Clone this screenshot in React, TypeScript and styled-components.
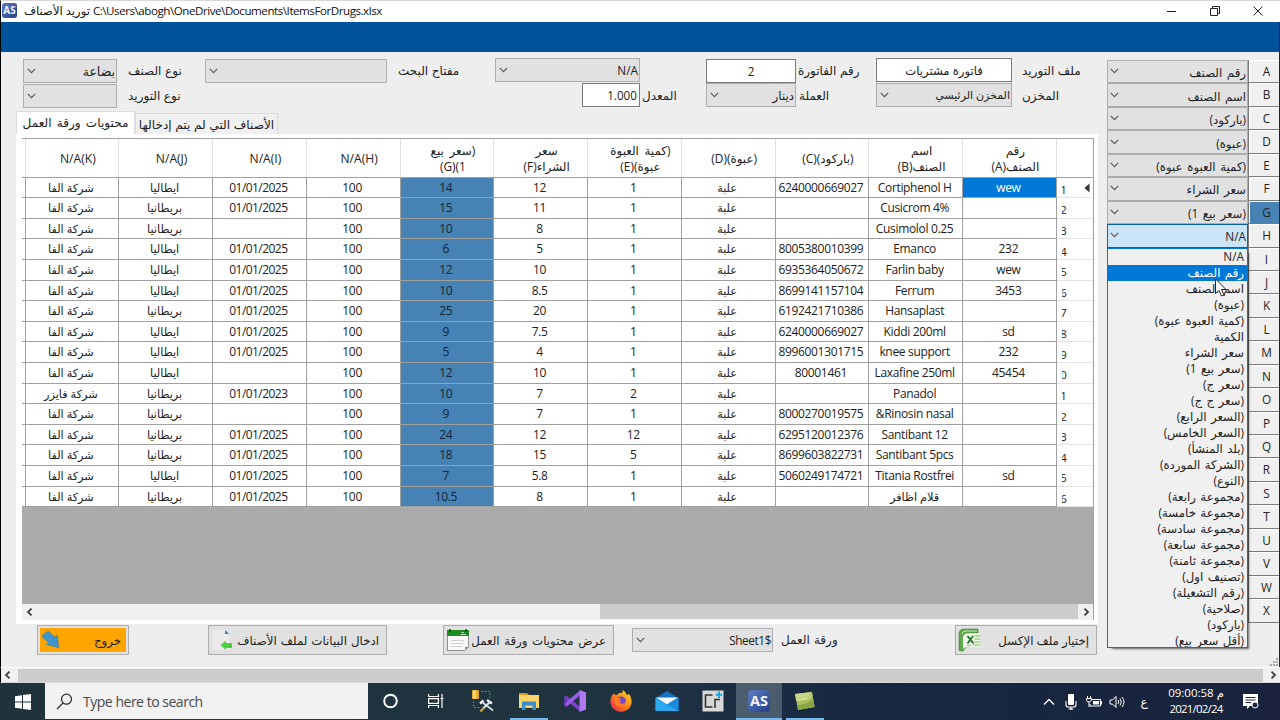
import type { ReactNode } from "react";
import styled, { createGlobalStyle, css } from "styled-components";

const GlobalStyle = createGlobalStyle`
    * {
        box-sizing: border-box;
    }

    body {
        margin: 0;
        overflow: hidden;
        font-family: "Open Sans", "DejaVu Sans", sans-serif;
        font-size: 11.8px;
        color: #222;
    }
`;

const Window = styled.div`
    width: 1280px;
    height: 720px;
    display: flex;
    flex-direction: column;
    background: #eeeeee;
`;

const TitleBar = styled.header`
    height: 22px;
    display: flex;
    align-items: center;
    padding: 0 0 2px 1px;
    background: #fff;
    border-top: 1px solid #d8d8d8;
    border-left: 1px solid #000;
`;

const TitleText = styled.span`
    margin-left: 7px;
    flex: 1;
    font-size: 11.6px;
    white-space: pre;
    color: #111;
`;

const TitlePath = styled.span`
    letter-spacing: -0.46px;
`;

const WindowButtons = styled.div`
    display: flex;
    gap: 31px;
    padding-right: 16px;
`;

const BlueBand = styled.div`
    height: 30px;
    background: #00539b;
    border-left: 1px solid #000;
    border-right: 1px solid #222;
`;

const Body = styled.main`
    height: 615px;
    display: flex;
    border-left: 1px solid #000;
    border-right: 1px solid #222;
    position: relative;
`;

const LeftPane = styled.div`
    width: 1106px;
    display: flex;
    flex-direction: column;
    padding-top: 6px;
`;

const FormGrid = styled.div`
    height: 53px;
    display: grid;
    grid-template-columns: 94px 88px 182px 108px 145px 66px 90px 80px 136px 84px;
    grid-template-rows: 24.5px 24.5px;
    padding-left: 22px;
`;

const Label = styled.label<{ $pad: number }>`
    padding: 5.4px 0 0 ${(p) => p.$pad}px;
    font-size: 12px;
    line-height: 16px;
    word-spacing: 0.5px;
    white-space: nowrap;
`;

const Input = styled.div<{ $center?: boolean; $top?: number }>`
    height: 24px;
    margin-top: ${(p) => p.$top ?? 0}px;
    border: 1px solid #7a7a7a;
    background: #fff;
    line-height: 22px;
    padding: 0 2px;
    text-align: ${(p) => (p.$center ? "center" : "right")};
    font-size: 11.7px;
`;

const RateInput = styled(Input)`
    width: 58px;
    justify-self: end;
`;

const Select = styled.div<{ $top?: number; $open?: boolean; $height?: number; $size?: number }>`
    height: ${(p) => p.$height ?? 24}px;
    margin-top: ${(p) => p.$top ?? 0}px;
    display: flex;
    justify-content: space-between;
    align-items: center;
    padding: 0 1px 0 3px;
    border: 1px solid ${(p) => (p.$open ? "#0a64ad" : "#adadad")};
    background: ${(p) => (p.$open ? "#cce4f7" : "#e1e1e1")};
    font-size: ${(p) => p.$size ?? 11.8}px;
    unicode-bidi: plaintext;
    white-space: nowrap;
`;

const MapSelect = styled(Select)`
    padding: 1px 1px 0 2px;
    word-spacing: 1.5px;

    svg {
        margin-top: -2px;
    }
`;

const Tabs = styled.div`
    height: 23px;
    display: flex;
    align-items: flex-end;
    padding-left: 15px;
`;

const Tab = styled.div<{ $active?: boolean }>`
    height: ${(p) => (p.$active ? 23 : 21)}px;
    width: ${(p) => (p.$active ? 119 : 143)}px;
    border: 1px solid #dcdcdc;
    border-bottom: none;
    background: ${(p) => (p.$active ? "#fff" : "#f0f0f0")};
    text-align: center;
    font-size: 12.1px;
    word-spacing: ${(p) => (p.$active ? 2 : 0.5)}px;
    line-height: ${(p) => (p.$active ? 22 : 21)}px;
    white-space: nowrap;
`;

const Panel = styled.section`
    width: 1082px;
    height: 490px;
    margin-left: 15px;
    padding: 4px 4px 4px 6px;
    background: #fff;
`;

const GridBox = styled.div`
    width: 1072px;
    height: 482px;
    display: flex;
    flex-direction: column;
    background: #ababab;
    border-top: 1px solid #a0a0a0;
    border-right: 1px solid #a0a0a0;
`;

const rowGrid = css`
    display: grid;
    grid-template-columns: 3.5px repeat(11, 93.75px) 1fr;
    background: #fff;
`;

const HeadRow = styled.div`
    ${rowGrid}
    height: 38.5px;
    border-bottom: 1px solid #a0a0a0;
`;

const HeadCell = styled.div<{ $latin?: boolean }>`
    direction: rtl;
    display: flex;
    flex-direction: column;
    justify-content: center;
    align-items: center;
    font-size: ${(p) => (p.$latin ? 12.1 : 11.9)}px;
    line-height: 15.5px;
    word-spacing: 2.5px;
    border-right: 1px solid #e0e0e0;
    padding-left: 12px;
    padding-top: 2px;
    white-space: nowrap;
`;

const HeadEdge = styled.div`
    border-right: 1px solid #e0e0e0;
`;

const DataRow = styled.div`
    ${rowGrid}
    height: 20.62px;
`;

const Cell = styled.div<{ $tone?: "blue" | "selected"; $kind?: "arabic" | "date" }>`
    overflow: hidden;
    padding-right: 2px;
    text-align: center;
    font-size: ${(p) => (p.$kind === "arabic" ? 11.3 : 12)}px;
    letter-spacing: ${(p) => (p.$kind === "arabic" ? "normal" : p.$kind === "date" ? "-0.55px" : "-0.33px")};
    line-height: 20px;
    white-space: nowrap;
    unicode-bidi: plaintext;
    border-right: 1px solid #a0a0a0;
    border-bottom: 1px solid #a0a0a0;
    ${(p) => p.$tone === "blue" && css`
        background: #4682b4;
        color: #12263a;
    `}
    ${(p) => p.$tone === "selected" && css`
        background: #0078d7;
        color: #fff;
    `}
`;

const EdgeCell = styled.div`
    border-right: 1px solid #a0a0a0;
    border-bottom: 1px solid #a0a0a0;
`;

const RowHead = styled.div`
    display: flex;
    align-items: center;
    justify-content: space-between;
    padding: 0 3px 0 5px;
    border-bottom: 1px solid #e4e4e4;

    svg {
        margin-top: 1px;
    }
`;

const RowNumber = styled.span`
    width: 5px;
    height: 15px;
    margin-top: 4px;
    overflow: hidden;
    display: flex;
    justify-content: flex-end;
    font-size: 11.5px;
    line-height: 15px;
`;

const GridFiller = styled.div`
    flex: 1;
`;

const GridScroll = styled.div`
    height: 16px;
    display: flex;
    justify-content: space-between;
    align-items: center;
    background: #f0f0f0;
    padding: 0 3px 1px 4px;
`;

const ScrollThumb = styled.div`
    width: 478px;
    height: 15px;
    margin-left: auto;
    margin-right: 5px;
    background: #cdcdcd;
`;

const Actions = styled.footer`
    display: flex;
    align-items: flex-start;
    padding: 1px 0 0 36px;
`;

const Button = styled.button<{ $width: number; $gap: number; $exit?: boolean; $space?: number }>`
    width: ${(p) => p.$width}px;
    height: 30px;
    margin-right: ${(p) => p.$gap}px;
    display: flex;
    align-items: center;
    justify-content: space-between;
    padding: ${(p) => (p.$exit ? "0 7px 0 3px" : "0 7px 0 2px")};
    border: 1px solid #adadad;
    background: ${(p) => (p.$exit ? "#ffa500" : "#e1e1e1")};
    box-shadow: ${(p) => (p.$exit ? "inset 0 0 0 2px #e1e1e1" : "none")};
    font: inherit;
    word-spacing: ${(p) => p.$space ?? 0}px;
    color: #222;
    white-space: nowrap;
`;

const SheetLabel = styled.span`
    width: 182px;
    padding: 7px 0 0 8px;
    font-size: 12px;
    word-spacing: 1px;
    line-height: 16px;
`;

const SheetSelect = styled(Select)`
    width: 141px;
    letter-spacing: -0.4px;
`;

const MapPane = styled.aside`
    width: 172px;
    padding-top: 8px;
    display: flex;
`;

const MapSelects = styled.div`
    width: 141px;
`;

const MapSlot = styled.div`
    height: 23.45px;
    position: relative;
`;

const Letters = styled.div`
    flex: 1;
`;

const Letter = styled.div<{ $on?: boolean }>`
    height: 23.45px;
    padding-left: 5px;
    border-left: 1px solid #7a7a7a;
    border-bottom: 1.5px solid #7a7a7a;
    text-align: center;
    line-height: 23px;
    background: ${(p) => (p.$on ? "#4682b4" : "#f0f0f0")};
    box-shadow: inset 1px 1px 0 #fff;
`;

const DropList = styled.div`
    position: absolute;
    top: 23.5px;
    left: 0;
    width: 141px;
    height: 400px;
    z-index: 2;
    overflow: hidden;
    direction: rtl;
    background: #f0f0f0;
    border: 1px solid #0078d7;
    box-shadow: 3px 3px 2px -2px rgba(0, 0, 0, 0.6);
`;

const Option = styled.div<{ $on?: boolean }>`
    height: 16px;
    line-height: 15px;
    padding: 0 3px;
    word-spacing: 1.3px;
    white-space: nowrap;
    color: ${(p) => (p.$on ? "#fff" : "#222")};
    background: ${(p) => (p.$on ? "#0078d7" : "transparent")};
`;

const Pointer = styled.svg`
    position: absolute;
    left: 1213px;
    top: 226px;
    z-index: 3;
`;

const Grip = styled.svg`
    position: absolute;
    right: 1px;
    bottom: 1px;
`;

const PageScroll = styled.div`
    height: 16px;
    display: flex;
    align-items: center;
    justify-content: space-between;
    padding: 0 3px 0 3px;
    background: #f0f0f0;
    border-top: 1px solid #fff;
    border-bottom: 1px solid #d8d8d8;
    border-left: 1px solid #000;
`;

const PageThumb = styled.div`
    width: 1245px;
    height: 13px;
    margin-right: 1px;
    background: #cdcdcd;
`;

const Taskbar = styled.nav`
    height: 37px;
    display: flex;
    color: #fff;
    background: linear-gradient(90deg, #20333b 0%, #1f3440 45%, #1a2942 65%, #17263f 80%, #1a223c 100%);
`;

const StartButton = styled.div`
    width: 45px;
    display: flex;
    align-items: center;
    justify-content: center;
`;

const SearchBox = styled.div`
    width: 323px;
    height: 36px;
    display: flex;
    align-items: center;
    padding-left: 11px;
    gap: 10px;
    background: #f2f2f2;
    color: #4a4a4a;
    font-size: 14px;
    letter-spacing: -0.48px;
`;

const TaskItem = styled.div<{ $open?: boolean; $active?: boolean }>`
    width: 38px;
    margin: 0 4px;
    display: flex;
    align-items: center;
    justify-content: center;
    border-bottom: 2px solid ${(p) => (p.$open ? "#76b9ed" : "transparent")};
    background: ${(p) => (p.$active ? "#4b5c6d" : "transparent")};
    background-clip: padding-box;
    ${(p) => p.$active && css`
        width: 46px;
        margin: 0 0;
    `}
`;

const TaskItems = styled.div`
    display: flex;
    flex: 1;
`;

const Tray = styled.div`
    display: flex;
    align-items: center;
    padding-right: 12px;
`;

const TrayIcon = styled.div<{ $width: number }>`
    width: ${(p) => p.$width}px;
    display: flex;
    justify-content: center;
    font-size: 12px;
`;

const Clock = styled.div`
    width: 72px;
    padding-bottom: 2px;
    text-align: center;
    font-size: 11.5px;
    line-height: 16px;
    white-space: pre;
    letter-spacing: -0.95px;
`;

const ClockDate = styled.div`
    letter-spacing: -0.8px;
`;

const Chevron = () => (
    <svg width="9" height="6" viewBox="0 0 9 6" fill="none" stroke="#555" strokeWidth="1.1">
        <path d="M0.8 0.8 4.5 4.6 8.2 0.8" />
    </svg>
);

const Arrow = ({ right }: { right?: boolean }) => (
    <svg width="7" height="8" viewBox="0 0 7 8" fill="none" stroke="#404040" strokeWidth="1.8">
        <path d={right ? "M1.5 0.6 5 4 1.5 7.4" : "M5.5 0.6 2 4 5.5 7.4"} />
    </svg>
);

const AppLogo = ({ size }: { size: number }) => (
    <svg width={size} height={size} viewBox="0 0 22 22">
        <defs>
            <linearGradient id="logo" x1="0" y1="0" x2="1" y2="1">
                <stop offset="0" stopColor="#5d7dc4" />
                <stop offset="1" stopColor="#253f85" />
            </linearGradient>
        </defs>
        <rect width="22" height="22" rx="4" fill="url(#logo)" />
        <text x="11" y="16" fontFamily="Open Sans" fontWeight="700" fontSize="14.5" textAnchor="middle" fill="#f2f4fa">AS</text>
    </svg>
);

const ExitIcon = () => (
    <svg width="20" height="20" viewBox="0 0 20 20">
        <path d="M1.500 5 7.500 1 13.500 7 16.500 5.500 17.500 17.500 5.500 14.500 7.500 12.500 1.500 7Z" fill="#3f95cc" stroke="#2b74a8" strokeWidth=".6" />
    </svg>
);

const ImportIcon = () => (
    <svg width="22" height="24" viewBox="0 0 22 24">
        <path d="M2 2H14L18 6V22H1Z" fill="#ebebeb" />
        <path d="M14 2 18 6H14Z" fill="#2c83b8" />
        <path d="M9.500 17 15 12.500V15H21V20H15V22Z" fill="#4bd13b" />
    </svg>
);

const SheetIcon = () => (
    <svg width="24" height="24" viewBox="0 0 24 24">
        <path d="M1.500 3H22.500V19L19 22.500H1.500Z" fill="#fafafa" stroke="#777" strokeWidth=".8" />
        <rect x="1" y="2" width="22" height="6" fill="#1e8b22" />
        <path d="M4 1V4M20 1V4" stroke="#163f16" strokeWidth="1.500" />
        <path d="M15.500 4.500H18M14.500 6.500H20" stroke="#b9e3b4" />
        <path d="M5 12.500H18M5 15.500H18M5 18.500H16" stroke="#d0d0d0" />
        <path d="M19 22V19H22.500Z" fill="#888" />
    </svg>
);

const ExcelIcon = () => (
    <svg width="23" height="24" viewBox="0 0 23 24">
        <path d="M1 6Q1 1 6 1H20V5H9V18L5 23Q1 23 1 22Z" fill="#5fa84c" stroke="#3c7d2e" strokeWidth=".6" />
        <path d="M4 6Q4 3 8 3H19" fill="none" stroke="#c5e5b5" />
        <path d="M8 5.500H22V19H8L5 21V8Z" fill="#f2f8ee" />
        <path d="M16.500 8H22M16.500 11H22M16.500 14H22M15 17H22M9 17.500H13" stroke="#9ccd84" strokeWidth="1.600" />
        <path d="M9.500 8 15.500 15.500M15 8 9.500 15.500" stroke="#257a2c" strokeWidth="2" />
    </svg>
);

const ToolsIcon = () => (
    <svg width="24" height="24" viewBox="0 0 24 24">
        <rect x="1" y="1" width="7" height="9" rx="1" fill="#e9ab2b" />
        <rect x="2" y="1.500" width="3" height="8" fill="#ffdc7a" />
        <path d="M10 2.500H19V9M2.500 12V18.500H9" fill="none" stroke="#5c8a5e" strokeDasharray="2 1.500" />
        <path d="M11 13 22 21.500" stroke="#c9d6e0" strokeWidth="2" />
        <path d="M19 13 12.500 19" stroke="#dfe5ea" strokeWidth="2.200" />
        <path d="M13 18.500 9.500 22.500" stroke="#c7a550" strokeWidth="2.200" />
        <path d="M9 14.500 12.500 11.500M16 11 21 14.500" stroke="#eceff1" strokeWidth="2.400" />
    </svg>
);

const FolderIcon = () => (
    <svg width="22" height="20" viewBox="0 0 22 20">
        <path d="M1 2H9L11 4H1Z" fill="#e0981f" />
        <path d="M1 4H21V17H1Z" fill="#fbd567" />
        <path d="M4 19V10.500H18V19H14.500V14.500H7.500V19Z" fill="#3a8bcb" />
    </svg>
);

const StudioIcon = () => (
    <svg width="24" height="24" viewBox="0 0 24 24" fill="none">
        <path d="M2 8 17.500 20.500" stroke="#7b42c9" strokeWidth="3.600" />
        <path d="M2 16.500 17.500 3.500" stroke="#9a5be6" strokeWidth="3.600" />
        <path d="M2 7.500V17" stroke="#7039b8" strokeWidth="1.800" />
        <path d="M16.500 1 23 3.500V20.500L16.500 23Z" fill="#b179f1" />
    </svg>
);

const FirefoxIcon = () => (
    <svg width="24" height="24" viewBox="0 0 24 24">
        <defs>
            <linearGradient id="fox" x1="1" y1="0" x2="0" y2="1">
                <stop offset="0" stopColor="#ffe226" />
                <stop offset=".45" stopColor="#ff8a16" />
                <stop offset="1" stopColor="#e81c55" />
            </linearGradient>
        </defs>
        <path d="M4.500 4.500Q6 6 8 6 10 3 13 4L14 1Q17 3 18 6L20 5Q23 9 22.500 14 21 22 12 23 3 22 1.500 14 1 8 4.500 4.500Z" fill="url(#fox)" />
        <circle cx="12" cy="12.500" r="5" fill="#7348c8" />
        <path d="M5 10Q8 7.500 12 10 10 12 12 14.500 15 16 17 12 17 18 11 18 6 17 5 10Z" fill="#ff7b20" />
    </svg>
);

const MailIcon = () => (
    <svg width="24" height="22" viewBox="0 0 24 22">
        <path d="M0.500 8 12 1 23.500 8V21H0.500Z" fill="#1672bd" />
        <path d="M1 7.500H23L12 14.500Z" fill="#f4f8fb" />
        <path d="M0.500 7.500 12 14.500 23.500 21H0.500Z" fill="#2ba9ee" />
        <path d="M23.500 7.500 12 14.500 23.500 21Z" fill="#198ddc" />
    </svg>
);

const CrystalIcon = () => (
    <svg width="22" height="22" viewBox="0 0 22 22">
        <rect x=".5" y=".5" width="21" height="21" fill="#d9d9d9" />
        <path d="M10.500 5H3.500V17H10.500M13 18V9.500H18" fill="none" stroke="#333" strokeWidth="1.600" />
        <path d="M17 1.500V8M13.800 4.800H20.200" stroke="#21a3dc" strokeWidth="2" />
    </svg>
);

const StickyIcon = () => (
    <svg width="22" height="20" viewBox="0 0 22 20">
        <path d="M1 3 18 1 20.500 16 4 19Z" fill="#a9bf60" />
        <path d="M1 3 18 1 12 8 2 9Z" fill="#c9d886" />
        <path d="M3 14Q12 14 19.500 8L20.500 16 4 19Z" fill="#8aa543" />
        <path d="M2 9Q12 10 18.500 4" stroke="#e2ebb4" fill="none" />
    </svg>
);

const taskItems: { icon: ReactNode; open?: boolean; active?: boolean }[] = [
    { icon: <svg width="16" height="16"><circle cx="7.500" cy="8" r="6.300" fill="none" stroke="#fff" strokeWidth="1.900" /></svg> },
    {
        icon: (
            <svg width="18" height="16" fill="none" stroke="#fff" strokeWidth="1.200">
                <path d="M.6 1V3.500H10.400V1M.6 15V12.500H10.400V15M.6 5.600H10.400V10.400H.6ZM14 1V15M12.500 5.500H15.500" />
            </svg>
        ),
    },
    { icon: <ToolsIcon /> },
    { icon: <FolderIcon />, open: true },
    { icon: <StudioIcon /> },
    { icon: <FirefoxIcon /> },
    { icon: <MailIcon /> },
    { icon: <CrystalIcon /> },
    { icon: <AppLogo size={22} />, open: true, active: true },
    { icon: <StickyIcon />, open: true },
];

const headers = [
    ["N/A(K)"],
    ["N/A(J)"],
    ["N/A(I)"],
    ["N/A(H)"],
    ["(سعر بيع", "1)(G)"],
    ["سعر", "الشراء(F)"],
    ["(كمية العبوة", "عبوة)(E)"],
    ["(عبوة)(D)"],
    ["(باركود)(C)"],
    ["اسم", "الصنف(B)"],
    ["رقم", "الصنف(A)"],
];

const alpha = "شركة الفا";
const pfizer = "شركة فايزر";
const italy = "ايطاليا";
const britain = "بريطانيا";
const box = "علبة";

const rows = [
    [alpha, italy, "01/01/2025", "100", "14", "12", "1", box, "6240000669027", "Cortiphenol H", "wew"],
    [alpha, britain, "01/01/2025", "100", "15", "11", "1", box, "", "Cusicrom 4%", ""],
    [alpha, britain, "", "100", "10", "8", "1", box, "", "Cusimolol 0.25", ""],
    [alpha, italy, "01/01/2025", "100", "6", "5", "1", box, "8005380010399", "Emanco", "232"],
    [alpha, italy, "01/01/2025", "100", "12", "10", "1", box, "6935364050672", "Farlin baby", "wew"],
    [alpha, italy, "01/01/2025", "100", "10", "8.5", "1", box, "8699141157104", "Ferrum", "3453"],
    [alpha, britain, "01/01/2025", "100", "25", "20", "1", box, "6192421710386", "Hansaplast", ""],
    [alpha, italy, "01/01/2025", "100", "9", "7.5", "1", box, "6240000669027", "Kiddi 200ml", "sd"],
    [alpha, italy, "01/01/2025", "100", "5", "4", "1", box, "8996001301715", "knee support", "232"],
    [alpha, italy, "", "100", "12", "10", "1", box, "80001461", "Laxafine 250ml", "45454"],
    [pfizer, britain, "01/01/2023", "100", "10", "7", "2", box, "", "Panadol", ""],
    [alpha, britain, "", "100", "9", "7", "1", box, "8000270019575", "&Rinosin nasal", ""],
    [alpha, britain, "01/01/2025", "100", "24", "12", "12", box, "6295120012376", "Santibant 12", ""],
    [alpha, britain, "01/01/2025", "100", "18", "15", "5", box, "8699603822731", "Santibant 5pcs", ""],
    [alpha, italy, "01/01/2025", "100", "7", "5.8", "1", box, "5060249174721", "Titania Rostfrei", "sd"],
    [alpha, britain, "01/01/2025", "100", "10.5", "8", "1", box, "", "قلام اظافر", ""],
];

// letter-spacing would break the joined Arabic script, so cells are told apart
const kindOf = (value: string) => {
    if (/[\u0600-\u06ff]/.test(value)) return "arabic";
    return value.includes("/") ? "date" : undefined;
};

const mapped = ["رقم الصنف", "اسم الصنف", "(باركود)", "(عبوة)", "(كمية العبوة عبوة)", "سعر الشراء", "(سعر بيع 1)", "N/A"];

const options = [
    "N/A",
    "رقم الصنف",
    "اسم الصنف",
    "(عبوة)",
    "(كمية العبوة عبوة)",
    "الكمية",
    "سعر الشراء",
    "(سعر بيع 1)",
    "(سعر ج)",
    "(سعر ج ج)",
    "(السعر الرابع)",
    "(السعر الخامس)",
    "(بلد المنشأ)",
    "(الشركة الموردة)",
    "(النوع)",
    "(مجموعة رابعة)",
    "(مجموعة خامسة)",
    "(مجموعة سادسة)",
    "(مجموعة سابعة)",
    "(مجموعة ثامنة)",
    "(تصنيف اول)",
    "(رقم التشغيلة)",
    "(صلاحية)",
    "(باركود)",
    "(أقل سعر بيع)",
];

function Filters() {
    return (
        <FormGrid>
            <Select $top={1} $size={12.5}><Chevron /><span>بضاعة</span></Select>
            <Label $pad={11}>نوع الصنف</Label>
            <Select $top={1}><Chevron /></Select>
            <Label $pad={11}>مفتاح البحث</Label>
            <Select><Chevron /><span>N/A</span></Select>
            <span />
            <Input $center $top={1}>2</Input>
            <Label $pad={2}>رقم الفاتورة</Label>
            <Input $center>فاتورة مشتريات</Input>
            <Label $pad={10}>ملف التوريد</Label>

            <Select $top={1}><Chevron /></Select>
            <Label $pad={11}>نوع التوريد</Label>
            <span />
            <span />
            <RateInput>1.000</RateInput>
            <Label $pad={2}>المعدل</Label>
            <Select><Chevron /><span>دينار</span></Select>
            <Label $pad={3}>العملة</Label>
            <Select $size={11}><Chevron /><span>المخزن الرئيسي</span></Select>
            <Label $pad={10}>المخزن</Label>
        </FormGrid>
    );
}

function SheetGrid() {
    return (
        <GridBox>
            <HeadRow>
                <HeadEdge />
                {headers.map((lines) => (
                    <HeadCell key={lines.join()} $latin={lines[0].startsWith("N")}>
                        {lines.map((line) => <span key={line}>{line}</span>)}
                    </HeadCell>
                ))}
                <span />
            </HeadRow>
            {rows.map((row, r) => (
                <DataRow key={r}>
                    <EdgeCell />
                    {row.map((value, c) => (
                        <Cell
                            key={c}
                            $kind={kindOf(value)}
                            $tone={c === 4 ? "blue" : r === 0 && c === 10 ? "selected" : undefined}
                        >
                            {value}
                        </Cell>
                    ))}
                    <RowHead>
                        <RowNumber>{r + 1}</RowNumber>
                        {r === 0 && <svg width="6" height="10"><path d="M5.500 .5V9.500L.5 5Z" fill="#333" /></svg>}
                    </RowHead>
                </DataRow>
            ))}
            <GridFiller />
            <GridScroll>
                <Arrow />
                <ScrollThumb />
                <Arrow right />
            </GridScroll>
        </GridBox>
    );
}

export default function App() {
    return (
        <Window>
            <GlobalStyle />
            <TitleBar>
                <AppLogo size={15} />
                <TitleText>توريد الأصناف <TitlePath>C:\Users\abogh\OneDrive\Documents\ItemsForDrugs.xlsx</TitlePath></TitleText>
                <WindowButtons>
                    <svg width="12" height="12" stroke="#222"><path d="M1 6.500H10" /></svg>
                    <svg width="12" height="12" fill="none" stroke="#222"><path d="M1.500 3.500H8.500V10.500H1.500ZM3.500 3.500V1.500H10.500V8.500H8.500" /></svg>
                    <svg width="12" height="12" stroke="#222"><path d="M1.500 1.500 10.500 10.500M10.500 1.500 1.500 10.500" /></svg>
                </WindowButtons>
            </TitleBar>
            <BlueBand />
            <Body>
                <LeftPane>
                    <Filters />
                    <Tabs>
                        <Tab $active>محتويات ورقة العمل</Tab>
                        <Tab>الأصناف التي لم يتم إدخالها</Tab>
                    </Tabs>
                    <Panel>
                        <SheetGrid />
                    </Panel>
                    <Actions>
                        <Button $width={92} $gap={79} $exit><ExitIcon /><span>خروج</span></Button>
                        <Button $width={179} $gap={56} $space={1}><ImportIcon /><span>ادخال البيانات لملف الأصناف</span></Button>
                        <Button $width={171} $gap={18} $space={1.5}><SheetIcon /><span>عرض محتويات ورقة العمل</span></Button>
                        <SheetSelect $top={3}><Chevron /><span>Sheet1$</span></SheetSelect>
                        <SheetLabel>ورقة العمل</SheetLabel>
                        <Button $width={142} $gap={0}><ExcelIcon /><span>إختيار ملف الإكسل</span></Button>
                    </Actions>
                </LeftPane>
                <MapPane>
                    <MapSelects>
                        {mapped.map((name, i) => (
                            <MapSlot key={name}>
                                <MapSelect $height={23.45} $open={i === 7}><Chevron /><span>{name}</span></MapSelect>
                                {i === 7 && (
                                    <DropList>
                                        {options.map((option, o) => <Option key={option} $on={o === 1}>{option}</Option>)}
                                    </DropList>
                                )}
                            </MapSlot>
                        ))}
                    </MapSelects>
                    <Letters>
                        {"ABCDEFGHIJKLMNOPQRSTUVWX".split("").map((l) => <Letter key={l} $on={l === "G"}>{l}</Letter>)}
                    </Letters>
                </MapPane>
                <Pointer width="14" height="20" viewBox="0 0 14 20">
                    <path d="M1.500 1V15.500L5 12.500 7.500 18 10 17 7.500 11.500H12Z" fill="#fff" stroke="#222" />
                </Pointer>
                <Grip width="8" height="8" fill="#aaa">
                    <path d="M6 0h2v2h-2zM6 3h2v2h-2zM6 6h2v2h-2zM3 3h2v2h-2zM3 6h2v2h-2zM0 6h2v2h-2z" />
                </Grip>
            </Body>
            <PageScroll>
                <Arrow />
                <PageThumb />
                <Arrow right />
            </PageScroll>
            <Taskbar>
                <StartButton>
                    <svg width="16" height="16" fill="#fff"><path d="M0 2.300 7 1.300V7.500H0ZM8 1.100 16 0V7.500H8ZM0 8.500H7V14.700L0 13.700ZM8 8.500H16V16L8 14.900Z" /></svg>
                </StartButton>
                <SearchBox>
                    <svg width="17" height="17" fill="none" stroke="#333" strokeWidth="1.300"><circle cx="10.500" cy="6.200" r="5" /><path d="M7 10 1 16" /></svg>
                    <span>Type here to search</span>
                </SearchBox>
                <TaskItems>
                    {taskItems.map((item, i) => <TaskItem key={i} $open={item.open} $active={item.active}>{item.icon}</TaskItem>)}
                </TaskItems>
                <Tray>
                    <TrayIcon $width={22}><svg width="12" height="8" fill="none" stroke="#fff" strokeWidth="1.300"><path d="M1 6.500 6 1.500 11 6.500" /></svg></TrayIcon>
                    <TrayIcon $width={22}>
                        <svg width="12" height="16"><rect x="3" y="0" width="6" height="11" rx="1" fill="#fff" /><path d="M1 7V11Q1 13 3.500 13H8.500Q11 13 11 11V7M6 13V16M3.500 15H8.500" fill="none" stroke="#fff" strokeWidth="1.100" /></svg>
                    </TrayIcon>
                    <TrayIcon $width={24}>
                        <svg width="16" height="12" fill="none" stroke="#fff"><path d="M6 3.500H14.500V10H4V8M15.500 5V8.500M1.500 0V2.500M4.500 0V2.500M.5 2.500H5.500V4Q5 6 3 6 1 6 .5 4ZM3 6V11" /><rect x="7" y="5" width="6" height="3.500" fill="#fff" stroke="none" /></svg>
                    </TrayIcon>
                    <TrayIcon $width={22}>
                        <svg width="17" height="14" fill="none" stroke="#fff"><path d="M1 5H3.500L7 1.500V12.500L3.500 9H1ZM9 5Q10.500 7 9 9M11 3.500Q13.500 7 11 10.500M13 2Q17 7 13 12" /></svg>
                    </TrayIcon>
                    <TrayIcon $width={32}>ع</TrayIcon>
                    <Clock>
                        <div>09:00:58 م</div>
                        <ClockDate>2021/02/24</ClockDate>
                    </Clock>
                    <TrayIcon $width={36}>
                        <svg width="17" height="17" viewBox="0 0 17 17"><path d="M1 1H16V13H8L5 16V13H1Z" fill="#fff" /><path d="M3.500 4.500H13.500M3.500 7H13.500M3.500 9.500H9" stroke="#1a243c" /><circle cx="13" cy="12" r="3" fill="#1a243c" stroke="#fff" /></svg>
                    </TrayIcon>
                </Tray>
            </Taskbar>
        </Window>
    );
}
